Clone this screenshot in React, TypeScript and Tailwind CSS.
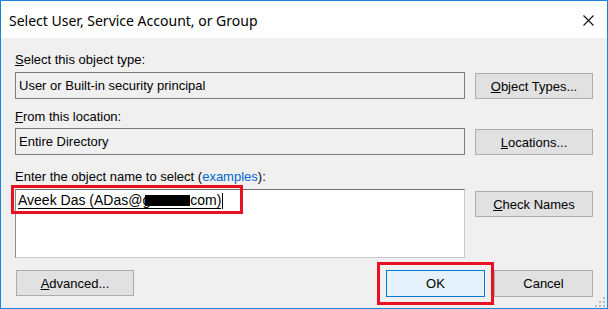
import React from "react";

const Btn = ({ children, className = "" }: { children: React.ReactNode; className?: string }) => (
  <div
    className={
      "flex items-center justify-center border border-[#adadad] bg-[#e1e1e1] text-[13px] leading-[15px] text-black " +
      className
    }
  >
    {children}
  </div>
);

export default function App() {
  return (
    <div
      className="relative flex h-[309px] w-[608px] flex-col border border-[#1883d7] bg-[#f0f0f0] text-black"
      style={{ fontFamily: '"Liberation Sans", Arial, sans-serif' }}
    >
      {/* Title bar */}
      <div className="flex h-[37px] shrink-0 items-center justify-between bg-white pl-[8px] pr-[13px]">
        <span className="pt-[2px] text-[14px] text-[#000]" style={{ fontFamily: '"Noto Sans", sans-serif' }}>
          Select User, Service Account, or Group
        </span>
        <svg width="11" height="11" viewBox="0 0 11 11" className="mt-[2px]">
          <path d="M0.5 0.5 L10.5 10.5 M10.5 0.5 L0.5 10.5" stroke="#111" strokeWidth="1.1" />
        </svg>
      </div>

      {/* Body */}
      <div className="flex flex-col px-[14px] text-[13px] leading-[15px]">
        <div className="mt-[14px]">
          <span className="underline">S</span>elect this object type:
        </div>
        <div className="mt-[5px] flex gap-[10px]">
          <div className="flex h-[27px] flex-1 items-center border border-[#7a7a7a] pl-[3px]">
            User or Built-in security principal
          </div>
          <Btn className="mt-[1px] h-[26px] w-[118px]">
            <span className="underline">O</span>bject Types...
          </Btn>
        </div>

        <div className="mt-[10px]">
          <span className="underline">F</span>rom this location:
        </div>
        <div className="mt-[4px] flex gap-[10px]">
          <div className="flex h-[27px] flex-1 items-center border border-[#7a7a7a] pl-[3px]">Entire Directory</div>
          <Btn className="mt-[1px] h-[26px] w-[118px]">
            <span className="underline">L</span>ocations...
          </Btn>
        </div>

        <div className="mt-[14px]">
          Enter the object name to select (<span className="text-[#0066cc]">examples</span>):
        </div>
        <div className="mt-[5px] flex gap-[10px]">
          <div className="h-[69px] flex-1 border border-[#c8c8c8] border-t-[#6e6e6e] border-l-[#8a8a8a] bg-white pl-[2px] pt-[3px]">
            <div className="flex items-center">
              <span className="inline-flex items-center border-b border-black text-[14px] leading-[15px]">
                Aveek Das (ADas@g
                <span className="ml-[-5px] inline-block h-[11px] w-[45px] bg-black" />
                com)
              </span>
              <span className="ml-[1px] inline-block h-[16px] w-[1px] bg-black" />
            </div>
          </div>
          <Btn className="mt-[2px] h-[26px] w-[118px]">
            <span className="underline">C</span>heck Names
          </Btn>
        </div>

        <div className="mt-[12px] flex">
          <Btn className="ml-[1px] h-[26px] w-[118px]">
            <span className="underline">A</span>dvanced...
          </Btn>
          <div className="flex-1" />
          <div className="flex h-[27px] w-[99px] items-center justify-center border border-[#0078d7] bg-[#e5f1fb]">
            OK
          </div>
          <Btn className="ml-[9px] h-[27px] w-[99px]">Cancel</Btn>
        </div>
      </div>

      {/* Annotation boxes */}
      <div className="absolute left-[10px] top-[184px] h-[29px] w-[232px] border-[3px] border-[#e81123]" />
      <div className="absolute left-[376px] top-[261px] h-[43px] w-[117px] border-[3px] border-[#e81123]" />

      {/* Resize grip */}
      <div className="absolute bottom-[1px] right-[2px] grid grid-cols-3 gap-[2px]">
        <span className="h-[2px] w-[2px]" />
        <span className="h-[2px] w-[2px]" />
        <span className="h-[2px] w-[2px] bg-[#b8b8b8]" />
        <span className="h-[2px] w-[2px]" />
        <span className="h-[2px] w-[2px] bg-[#b8b8b8]" />
        <span className="h-[2px] w-[2px] bg-[#b8b8b8]" />
        <span className="h-[2px] w-[2px] bg-[#b8b8b8]" />
        <span className="h-[2px] w-[2px] bg-[#b8b8b8]" />
        <span className="h-[2px] w-[2px] bg-[#b8b8b8]" />
      </div>
    </div>
  );
}
